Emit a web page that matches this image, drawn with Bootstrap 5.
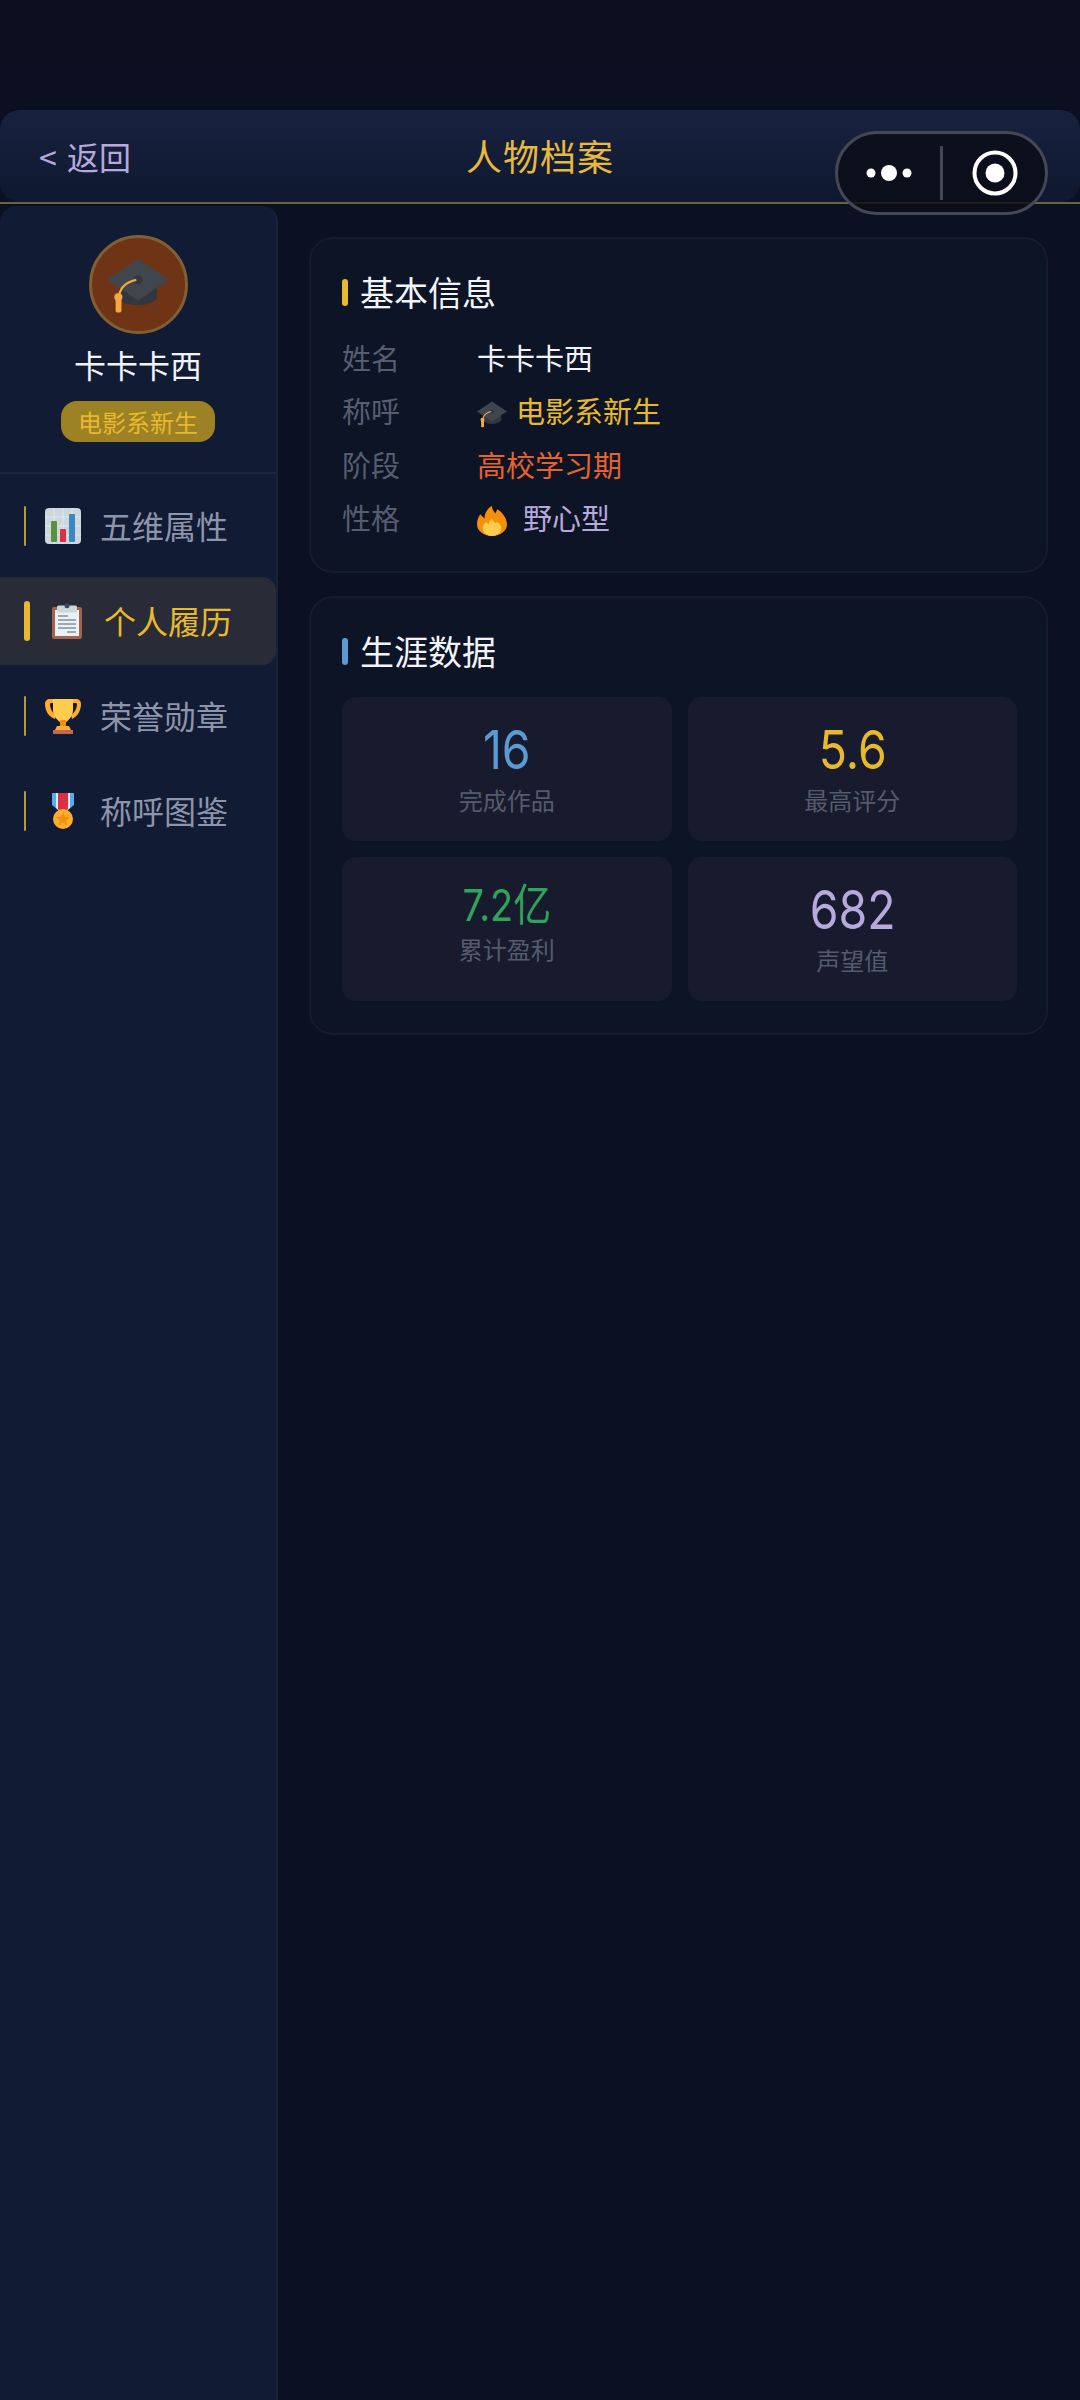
<!DOCTYPE html>
<html lang="zh">
<head>
  <meta charset="UTF-8" />
  <title>人物档案</title>
  <link href="https://cdn.jsdelivr.net/npm/bootstrap@5.3.3/dist/css/bootstrap.min.css" rel="stylesheet" />
  <style>
    body {
      background: #0b1022;
      font-family: "Noto Sans CJK SC", "Noto Sans", sans-serif;
      width: 1080px;
      height: 2400px;
      overflow: hidden;
    }
    .page-wrap { padding-top: 110px; height: 2400px; position: relative; background: linear-gradient(180deg, #0a0e1f 0, #0b1022 200px); }
    .top-bar {
      height: 92px;
      border-radius: 20px;
      background: linear-gradient(180deg, #18223f, #0f1830);
      padding: 0 39px;
    }
    .back-link { flex: 1; color: #b6a9dc; font-size: 32px; line-height: 1; margin-top: -1px; word-spacing: 3px; }
    .top-title { color: #e7b93c; font-size: 36px; letter-spacing: 1px; line-height: 1; margin-top: -2px; }
    .top-side { flex: 1; }
    .gold-line { height: 2px; background: #67653f; margin-bottom: 2px; }
    .capsule {
      position: absolute;
      left: 835px;
      top: 131px;
      width: 213px;
      height: 84px;
      border-radius: 42px;
      border: 3px solid #444854;
      background: rgba(10, 13, 22, .8);
    }
    .capsule-half { width: 50%; height: 100%; }
    .capsule-half.is-right { padding-left: 3px; }
    .capsule-sep { width: 3px; height: 54px; background: #444854; flex: none; }
    .side-panel {
      width: 278px;
      flex: none;
      background: #111b34;
      border-right: 2px solid #182238;
      border-radius: 16px 16px 0 0;
    }
    .profile-box { height: 268px; padding-top: 29px; border-bottom: 2px solid #1b2640; }
    .avatar-ring {
      width: 99px;
      height: 99px;
      border-radius: 50%;
      background: #6f3415;
      border: 3px solid #7f5f33;
    }
    .profile-name { color: #f2f4fa; font-size: 32px; line-height: 44px; margin-top: 8px; }
    .profile-tag {
      display: inline-block;
      background: #9c8225;
      color: #e8b92e;
      font-size: 24px;
      line-height: 41px;
      padding: 0 17px;
      border-radius: 16px;
      margin-top: 15px;
    }
    .side-menu { padding-top: 8px; }
    .menu-row {
      height: 88px;
      margin-bottom: 7px;
      padding-left: 24px;
      color: #8d95aa;
      font-size: 32px;
    }
    .menu-text { margin-top: -3px; }
    .menu-mark { width: 2px; height: 40px; background: #b59a35; border-radius: 3px; flex: none; margin-right: 19px; }
    .menu-ico { width: 36px; height: 36px; flex: none; margin-right: 19px; }
    .menu-row.is-on { background: #292c36; border-radius: 0 14px 14px 0; color: #e8b92e; }
    .menu-row.is-on .menu-mark { width: 6px; background: #e8b92e; }
    .main-pane { padding: 31px 32px 0 31px; }
    .info-box {
      background: #0d1426;
      border: 2px solid #141c2e;
      border-radius: 24px;
      padding: 0 29px 0 31px;
      margin-bottom: 23px;
    }
    .box-head { color: #f2f4fa; font-size: 34px; line-height: 44px; padding-top: 31px; }
    .head-bar { width: 6px; height: 27px; border-radius: 3px; margin-right: 12px; }
    .info-rows { padding-top: 18px; padding-bottom: 25px; }
    .info-line { height: 53.5px; font-size: 29px; }
    .info-line > span { margin-top: -3px; }
    .info-key { width: 135px; color: #565d70; }
    .info-emoji { width: 30px; height: 30px; margin-right: 9px; margin-top: 3px; }
    .c-white { color: #f2f4fa; }
    .c-gold { color: #e8b92e; }
    .c-orange { color: #e5632c; }
    .c-violet { color: #b6a9dc; }
    .c-blue { color: #5b9bd5; }
    .c-green { color: #2fa45a; }
    .stat-grid { display: grid; grid-template-columns: 1fr 1fr; gap: 16px; padding: 24px 0 32px; }
    .stat-tile { height: 144px; background: #171b2d; border-radius: 14px; text-align: center; }
    .stat-num { font-family: "Inter", "Noto Sans CJK SC", sans-serif; font-size: 54px; line-height: 60px; padding-top: 23px; font-weight: 400; transform: scaleX(.86); }
    .stat-num.is-small { font-size: 44px; line-height: 50px; }
    .stat-cap { color: #545b6d; font-size: 24px; line-height: 34px; margin-top: 3px; }
    .stat-num.is-small + .stat-cap { margin-top: 2px; }
  </style>
</head>
<body>
  <svg width="0" height="0" class="position-absolute">
    <defs>
      <symbol id="ico-cap" viewBox="0 0 36 36">
        <path fill="#31373d" d="M7 18v8c4 5 18 5 22 0v-8z"/>
        <path fill="#3f464d" d="M18 3 36 15 18 27 0 15z"/>
        <circle cx="18" cy="15" r="2.600" fill="#31373d"/>
        <path fill="none" stroke="#f4a842" stroke-width="1.300" d="M17 15c-5 1-9 4-10 9"/>
        <circle cx="6.600" cy="25" r="2.400" fill="#f4a842"/>
        <rect x="5" y="25" width="3.400" height="9" rx="1" fill="#f4a842"/>
      </symbol>
      <symbol id="ico-chart" viewBox="0 0 36 36">
        <rect x="0" y="0" width="36" height="36" rx="4" fill="#ccd6dd"/>
        <path stroke="#e1e8ed" stroke-width="1" d="M9 0v36M18 0v36M27 0v36M0 9h36M0 18h36M0 27h36"/>
        <rect x="6" y="13" width="6" height="21" rx="1" fill="#5c913b"/>
        <rect x="15" y="21" width="6" height="13" rx="1" fill="#dd2e44"/>
        <rect x="24" y="6" width="6" height="28" rx="1" fill="#3b88c3"/>
      </symbol>
      <symbol id="ico-board" viewBox="0 0 36 36">
        <rect x="3" y="4" width="30" height="32" rx="2" fill="#a0634f"/>
        <rect x="6" y="7" width="24" height="26" fill="#ecf0f3"/>
        <rect x="8" y="2.500" width="20" height="7" rx="1.500" fill="#ccd6dd"/>
        <circle cx="18" cy="2.800" r="2.500" fill="#3d4a5c"/>
        <path stroke="#99aab5" stroke-width="2" d="M9 13h10M9 17h18M9 21h18M9 25h18M18 29h9"/>
      </symbol>
      <symbol id="ico-cup" viewBox="0 0 36 36">
        <path fill="#ffac33" d="M5 1h26c3 0 5 2 5 5 0 7-4 13-9 15l-1-4c3-2 6-6 6-11 0-1-1-1-2-1H7c-1 0-2 0-2 1 0 5 3 9 6 11l-1 4C4 19 0 13 0 6c0-3 2-5 5-5z"/>
        <path fill="#ffcc4d" d="M8 1h20v11c0 6-5 11-7 12v4h-6v-4c-2-1-7-6-7-12z"/>
        <path fill="#f4900c" d="M15 22h6v6h-6z"/>
        <path fill="#ffac33" d="M12 28h12l2 4H10z"/>
        <rect x="8" y="32" width="20" height="4" fill="#c1694f"/>
      </symbol>
      <symbol id="ico-medal" viewBox="0 0 36 36">
        <path fill="#55acee" d="M7 0h22v12l-11 9-11-9z"/>
        <path fill="#e1e8ed" d="M11 0h14v15l-7 6-7-6z"/>
        <path fill="#dd2e44" d="M13 0h10v16l-5 5-5-5z"/>
        <circle cx="18" cy="26" r="10" fill="#ffac33"/>
        <path fill="#f4900c" d="m18 19 2 5h5l-4 3.500 1.500 5-4.500-3-4.500 3 1.500-5-4-3.500h5z"/>
      </symbol>
      <symbol id="ico-fire" viewBox="0 0 36 36">
        <path fill="#f4900c" d="M36 22c0 8-8 14-18 14S0 30 0 22c0-5 2-9 4-12 1 2 3 3 5 5 0-6 3-12 9-15 0 4 2 6 4 9 1-2 2-3 2-5 6 3 12 11 12 18z"/>
        <path fill="#ffcc4d" d="M29 27c0 5-5 9-11 9S7 32 7 27c0-3 2-6 4-8 1 2 2 3 3 3 0-3 2-6 4-7 1 3 3 4 4 6l2-2c3 2 5 5 5 8z"/>
      </symbol>
    </defs>
  </svg>

  <div class="page-wrap d-flex flex-column">
    <div class="top-bar d-flex align-items-center">
      <div class="back-link">&lt; 返回</div>
      <div class="top-title">人物档案</div>
      <div class="top-side"></div>
    </div>
    <div class="gold-line"></div>

    <div class="capsule d-flex align-items-center">
      <div class="capsule-half d-flex align-items-center justify-content-center">
        <svg width="46" height="18" viewBox="0 0 46 18"><circle cx="5" cy="9" r="4.500" fill="#fff"/><circle cx="23" cy="9" r="8" fill="#fff"/><circle cx="41" cy="9" r="4.500" fill="#fff"/></svg>
      </div>
      <div class="capsule-sep"></div>
      <div class="capsule-half is-right d-flex align-items-center justify-content-center">
        <svg width="46" height="46" viewBox="0 0 46 46"><circle cx="23" cy="23" r="20.500" fill="none" stroke="#fff" stroke-width="4"/><circle cx="23" cy="23" r="9.500" fill="#fff"/></svg>
      </div>
    </div>

    <div class="d-flex flex-grow-1">
      <aside class="side-panel">
        <div class="profile-box text-center">
          <div class="avatar-ring d-flex align-items-center justify-content-center mx-auto">
            <svg width="62" height="62"><use href="#ico-cap"/></svg>
          </div>
          <div class="profile-name">卡卡卡西</div>
          <div class="profile-tag">电影系新生</div>
        </div>
        <div class="side-menu">
          <div class="menu-row d-flex align-items-center"><span class="menu-mark"></span><svg class="menu-ico"><use href="#ico-chart"/></svg><span class="menu-text">五维属性</span></div>
          <div class="menu-row is-on d-flex align-items-center"><span class="menu-mark"></span><svg class="menu-ico"><use href="#ico-board"/></svg><span class="menu-text">个人履历</span></div>
          <div class="menu-row d-flex align-items-center"><span class="menu-mark"></span><svg class="menu-ico"><use href="#ico-cup"/></svg><span class="menu-text">荣誉勋章</span></div>
          <div class="menu-row d-flex align-items-center"><span class="menu-mark"></span><svg class="menu-ico"><use href="#ico-medal"/></svg><span class="menu-text">称呼图鉴</span></div>
        </div>
      </aside>

      <main class="main-pane flex-grow-1">
        <section class="info-box">
          <div class="box-head d-flex align-items-center"><span class="head-bar" style="background:#e8b92e"></span>基本信息</div>
          <div class="info-rows">
            <div class="info-line d-flex align-items-center"><span class="info-key">姓名</span><span class="c-white">卡卡卡西</span></div>
            <div class="info-line d-flex align-items-center"><span class="info-key">称呼</span><svg class="info-emoji"><use href="#ico-cap"/></svg><span class="c-gold">电影系新生</span></div>
            <div class="info-line d-flex align-items-center"><span class="info-key">阶段</span><span class="c-orange">高校学习期</span></div>
            <div class="info-line d-flex align-items-center"><span class="info-key">性格</span><svg class="info-emoji me-3"><use href="#ico-fire"/></svg><span class="c-violet">野心型</span></div>
          </div>
        </section>
        <section class="info-box">
          <div class="box-head d-flex align-items-center"><span class="head-bar" style="background:#5b9bd5"></span>生涯数据</div>
          <div class="stat-grid">
            <div class="stat-tile"><div class="stat-num c-blue">16</div><div class="stat-cap">完成作品</div></div>
            <div class="stat-tile"><div class="stat-num c-gold">5.6</div><div class="stat-cap">最高评分</div></div>
            <div class="stat-tile"><div class="stat-num is-small c-green">7.2亿</div><div class="stat-cap">累计盈利</div></div>
            <div class="stat-tile"><div class="stat-num c-violet">682</div><div class="stat-cap">声望值</div></div>
          </div>
        </section>
      </main>
    </div>
  </div>
</body>
</html>
